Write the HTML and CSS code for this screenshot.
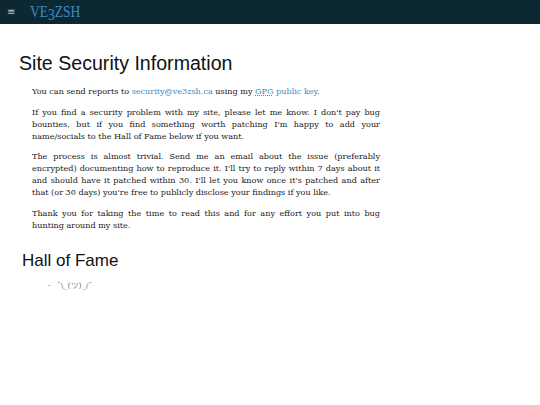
FILE: index.html
```html
<!DOCTYPE html>
<html lang="en">
<head>
<meta charset="utf-8">
<title>Site Security Information</title>
<link rel="stylesheet" href="styles.css">
</head>
<body>
<header class="topbar">
  <span class="menu">&#8801;</span>
  <a class="brand" href="#">VE<span class="os">3</span>ZSH</a>
</header>
<main class="page">
  <h1 class="title">Site Security Information</h1>
  <section class="body">
    <p>You can send reports to <a href="#">security@ve3zsh.ca</a> using my <a href="#"><abbr title="GNU Privacy Guard">GPG</abbr> public key</a>.</p>
    <p>If you find a security problem with my site, please let me know. I don't pay bug bounties, but if you find something worth patching I'm happy to add your name/socials to the Hall of Fame below if you want.</p>
    <p>The process is almost trivial. Send me an email about the issue (preferably encrypted) documenting how to reproduce it. I'll try to reply within 7 days about it and should have it patched within 30. I'll let you know once it's patched and after that (or 30 days) you're free to publicly disclose your findings if you like.</p>
    <p>Thank you for taking the time to read this and for any effort you put into bug hunting around my site.</p>
  </section>
  <h2 class="subtitle">Hall of Fame</h2>
  <ul class="fame">
    <li>¯\_(ツ)_/¯</li>
  </ul>
</main>
</body>
</html>
```
FILE: styles.css
```css
html, body {
  margin: 0;
  padding: 0;
  background: #ffffff;
}
body {
  font-family: "DejaVu Serif", serif;
  color: #1a1a1a;
}
.topbar {
  height: 24px;
  background: #0c2833;
  display: flex;
  align-items: center;
  padding-left: 7px;
}
.menu {
  color: #b9c3c8;
  font-family: "DejaVu Sans", sans-serif;
  font-size: 10px;
  line-height: 1;
  width: 23px;
}
.brand {
  display: inline-block;
  color: #3d8cc4;
  text-decoration: none;
  font-family: "Liberation Serif", serif;
  font-size: 16.5px;
  transform: scaleX(0.82);
  transform-origin: left center;
}
.brand .os {
  position: relative;
  top: 0.2em;
}
.page {
  padding: 0 0 0 19px;
}
.title {
  font-family: "Liberation Sans", Arial, sans-serif;
  font-weight: normal;
  font-size: 19.6px;
  margin: 28px 0 0 0;
  color: #111;
}
.body {
  width: 348px;
  margin-left: 13px;
  margin-top: 10px;
  font-size: 8.1px;
  line-height: 12px;
}
.body p {
  margin: 0 0 8.5px 0;
  text-align: justify;
}
.body a {
  color: #3d8cc4;
  text-decoration: none;
}
.body abbr {
  text-decoration: underline dotted;
}
.subtitle {
  font-family: "Liberation Sans", Arial, sans-serif;
  font-weight: normal;
  font-size: 17px;
  margin: 20px 0 0 3px;
  color: #111;
}
.fame {
  list-style: none;
  margin: 9px 0 0 0;
  padding-left: 29px;
  font-size: 8px;
  color: #777;
}
.fame li::before {
  content: "-";
  margin-right: 6px;
}
```
